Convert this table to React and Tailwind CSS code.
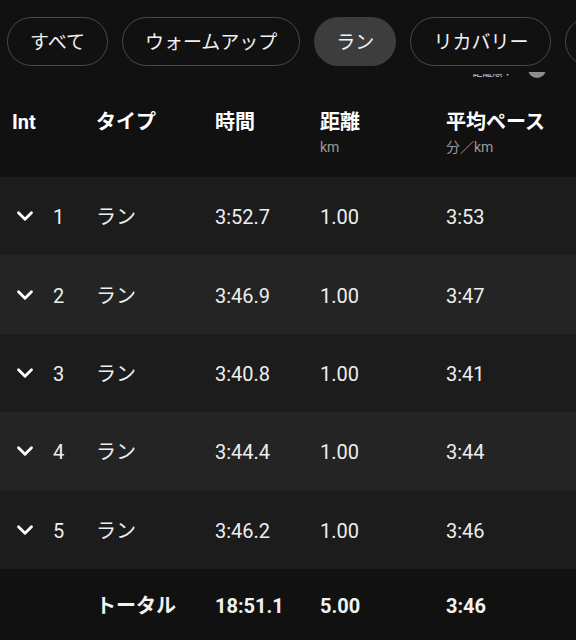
import React from 'react';
import { ChevronDown } from 'lucide-react';

const FONT = { fontFamily: 'Roboto, "Noto Sans CJK JP", sans-serif' };

const CHIPS = [
  { label: 'すべて' },
  { label: 'ウォームアップ' },
  { label: 'ラン', active: true },
  { label: 'リカバリー' },
  { label: 'クールダウン' },
];

const LAPS = [
  { n: 1, time: '3:52.7', dist: '1.00', pace: '3:53' },
  { n: 2, time: '3:46.9', dist: '1.00', pace: '3:47' },
  { n: 3, time: '3:40.8', dist: '1.00', pace: '3:41' },
  { n: 4, time: '3:44.4', dist: '1.00', pace: '3:44' },
  { n: 5, time: '3:46.2', dist: '1.00', pace: '3:46' },
];

const COLS = 'grid grid-cols-[96px_119px_105px_126px_1fr]';

const Chip = ({ label, active }) => (
  <div
    className={
      'h-[49px] shrink-0 px-[22px] pt-[3px] rounded-full flex items-center text-[19px] text-[#f2f2f2] ' +
      (active ? 'bg-[#3d3d3d]' : 'border-[1.5px] border-[#4a4a4a]')
    }
  >
    {label}
  </div>
);

const LapRow = ({ lap, odd }) => (
  <div className={COLS + ' h-[78.4px] pt-[2px] items-center text-[20px] text-[#eeeeee] ' + (odd ? 'bg-[#1c1c1c]' : 'bg-[#242424]')}>
    <div className="flex items-center pl-[12px]">
      <ChevronDown size={26} strokeWidth={2.6} className="text-white -mt-[2px]" />
      <span className="ml-[15px]">{lap.n}</span>
    </div>
    <span>ラン</span>
    <span>{lap.time}</span>
    <span>{lap.dist}</span>
    <span>{lap.pace}</span>
  </div>
);

export default function App() {
  return (
    <div className="w-[576px] h-[640px] bg-[#111111] overflow-hidden" style={FONT}>
      {/* filter chips */}
      <div className="flex gap-[14px] pl-[7px] pt-[17px] whitespace-nowrap overflow-hidden">
        {CHIPS.map(c => <Chip key={c.label} {...c} />)}
      </div>

      {/* strip partly hidden under the chips */}
      <div className="h-[24px] flex items-start justify-end pr-[30px] gap-[18px] pt-[6px]">
        <div className="h-[3px] overflow-hidden mt-[2px]">
          <span className="block text-[10px] leading-[10px] -mt-[6px] text-[#cccccc]">距離順 ▾</span>
        </div>
        <div className="w-[18px] h-[6px] overflow-hidden">
          <div className="w-[18px] h-[18px] rounded-full bg-[#8e8e8e] -mt-[12px]" />
        </div>
      </div>

      {/* header */}
      <div className={COLS + ' h-[87px] pt-[20px] items-start text-white'}>
        <div className="pl-[12px] text-[20px] font-bold leading-[24px]">Int</div>
        <div className="text-[20px] font-bold leading-[24px]">タイプ</div>
        <div className="text-[20px] font-bold leading-[24px]">時間</div>
        <div>
          <div className="text-[20px] font-bold leading-[24px]">距離</div>
          <div className="text-[14px] leading-[18px] mt-[4px] text-[#9a9a9a]">km</div>
        </div>
        <div>
          <div className="text-[20px] font-bold leading-[24px]">平均ペース</div>
          <div className="text-[14px] leading-[18px] mt-[4px] text-[#9a9a9a]">分／km</div>
        </div>
      </div>

      {LAPS.map((lap, i) => <LapRow key={lap.n} lap={lap} odd={i % 2 === 0} />)}

      {/* total */}
      <div className={COLS + ' h-[71px] pt-[3px] items-center text-[20px] font-bold text-[#f2f2f2]'}>
        <span />
        <span>トータル</span>
        <span>18:51.1</span>
        <span>5.00</span>
        <span>3:46</span>
      </div>
    </div>
  );
}
